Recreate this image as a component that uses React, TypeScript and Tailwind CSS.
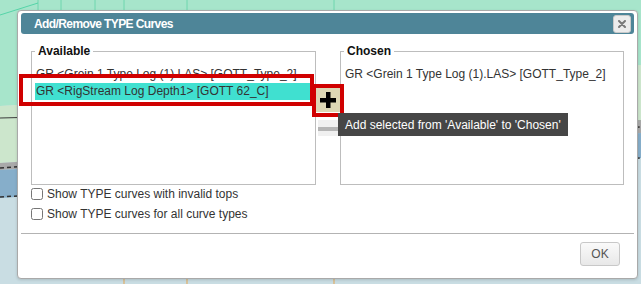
import React from "react";

const sans = "font-['Liberation_Sans',Arial,sans-serif]";

function Backdrop() {
  // the chart/map behind the dialog
  const topLines = [38, 61, 95, 124, 187, 334];
  const bottomLines = [124, 187, 334];
  return (
    <svg width={641} height={284} className="absolute inset-0">
      <rect width={641} height={284} fill="#c9dde3" />
      <polygon points="0,0 641,0 641,65 0,106" fill="#a7e5cb" />
      <polygon points="0,106 641,65 641,121 0,163" fill="#cce6cc" />
      <line x1={0} y1={118} x2={20} y2={117.5} stroke="#3c3c3c" strokeWidth={1.2} />
      <line x1={630} y1={121} x2={641} y2={121} stroke="#9a9a9a" strokeWidth={1.5} />
      <polygon points="0,163 641,121 641,133 0,170" fill="#a9a9a9" />
      <polygon points="0,170 641,133 641,158 0,198" fill="#86aeca" />
      <line x1={0} y1={168} x2={641} y2={127} stroke="#333" strokeWidth={1.5} strokeDasharray="4 3" />
      <line x1={0} y1={197} x2={641} y2={158} stroke="#333" strokeWidth={1.5} strokeDasharray="4 3" />
      {topLines.map((x) => (
        <line key={x} x1={x} y1={0} x2={x} y2={12} stroke="#6fd6ae" strokeWidth={1} />
      ))}
      {bottomLines.map((x) => (
        <line key={x} x1={x} y1={276} x2={x} y2={284} stroke="#e2b06a" strokeWidth={1.2} />
      ))}
      <line x1={0} y1={15} x2={38} y2={3} stroke="#55d4a8" strokeWidth={1} />
    </svg>
  );
}

function Fieldset({ title, children }: { title: string; children: React.ReactNode }) {
  return (
    <fieldset className="h-[142px] border border-[#bdbdbd] px-[3px] pt-[7px]">
      <legend className="px-[3px] text-[12px] font-bold leading-[16px] text-[#111]">{title}</legend>
      {children}
    </fieldset>
  );
}

function Row({ text, selected }: { text: string; selected?: boolean }) {
  return (
    <div
      className={
        "h-[17px] whitespace-nowrap pl-[1px] text-[12px] leading-[17px] text-[#333] " +
        (selected ? "mr-[2px] bg-[#40e0d0]" : "")
      }
    >
      {text}
    </div>
  );
}

function Check({ label }: { label: string }) {
  return (
    <label className="flex h-[20px] items-center gap-[4px] text-[12px] text-[#333]">
      <input type="checkbox" readOnly className="m-0 h-[12px] w-[12px]" />
      {label}
    </label>
  );
}

export default function App() {
  return (
    <div className={`relative h-[284px] w-[641px] overflow-hidden ${sans}`}>
      <Backdrop />

      <div className="absolute left-[17px] top-[10px] flex h-[269px] w-[621px] flex-col rounded-[4px] border border-[#a9a9a9] bg-white px-[3px] pt-[2px] shadow-[0_1px_3px_rgba(0,0,0,0.15)]">
        <div className="flex h-[21px] items-center justify-between rounded-[3px] bg-[#4e8598] pl-[13px] pr-[3px]">
          <span className="text-[12px] font-bold tracking-[-0.6px] text-white">Add/Remove TYPE Curves</span>
          <button className="flex h-[18px] w-[18px] items-center justify-center rounded-[3px] border border-[#c9c9c9] bg-[#ececec]">
            <svg width="8" height="8" viewBox="0 0 8 8">
              <path d="M1 1 L7 7 M7 1 L1 7" stroke="#7a7a7a" strokeWidth="2" strokeLinecap="round" />
            </svg>
          </button>
        </div>

        <div className="mt-[9px] flex px-[10px]">
          <div className="w-[285px]">
            <Fieldset title="Available">
              <Row text="GR <Grein 1 Type Log (1).LAS> [GOTT_Type_2]" />
              <Row text="GR <RigStream Log Depth1> [GOTT 62_C]" selected />
            </Fieldset>
          </div>
          <div className="flex w-[24px] flex-col items-center gap-[8px] pt-[45px]">
            <button className="flex h-[24px] w-[24px] items-center justify-center bg-[#ddd7b5]">
              <svg width="18" height="18" viewBox="0 0 18 18">
                <rect x="7" y="1" width="4.5" height="16" fill="#000" />
                <rect x="1" y="7" width="16" height="4.5" fill="#000" />
              </svg>
            </button>
            <button className="h-[16px] w-[20px] bg-[#f0f0f0] pt-[2px]">
              <div className="h-[4px] w-full bg-[#b5b5b5]" />
            </button>
          </div>
          <div className="w-[284px]">
            <Fieldset title="Chosen">
              <Row text="GR <Grein 1 Type Log (1).LAS> [GOTT_Type_2]" />
            </Fieldset>
          </div>
        </div>

        <div className="mt-[-1px] flex flex-col px-[10px]">
          <Check label="Show TYPE curves with invalid tops" />
          <Check label="Show TYPE curves for all curve types" />
        </div>

        <div className="mt-[9px] border-t border-[#b3b3b3]" />

        <div className="flex justify-end pr-[14px] pt-[8px]">
          <button className="h-[24px] w-[40px] rounded-[3px] border border-[#c8c8c8] bg-gradient-to-b from-[#fafafa] to-[#e8e8e8] text-[12px] text-[#555]">
            OK
          </button>
        </div>
      </div>

      {/* annotations */}
      <div className="absolute left-[19px] top-[74px] h-[32px] w-[295px] border-[4px] border-[#d00000]" />
      <div className="absolute left-[312px] top-[84px] h-[33px] w-[32px] border-[4px] border-[#d00000]" />

      <div className="absolute left-[338px] top-[113px] flex h-[23px] w-[230px] items-center bg-[#464646] pl-[7px] text-[12px] text-white">
        Add selected from 'Available' to 'Chosen'
      </div>
    </div>
  );
}
